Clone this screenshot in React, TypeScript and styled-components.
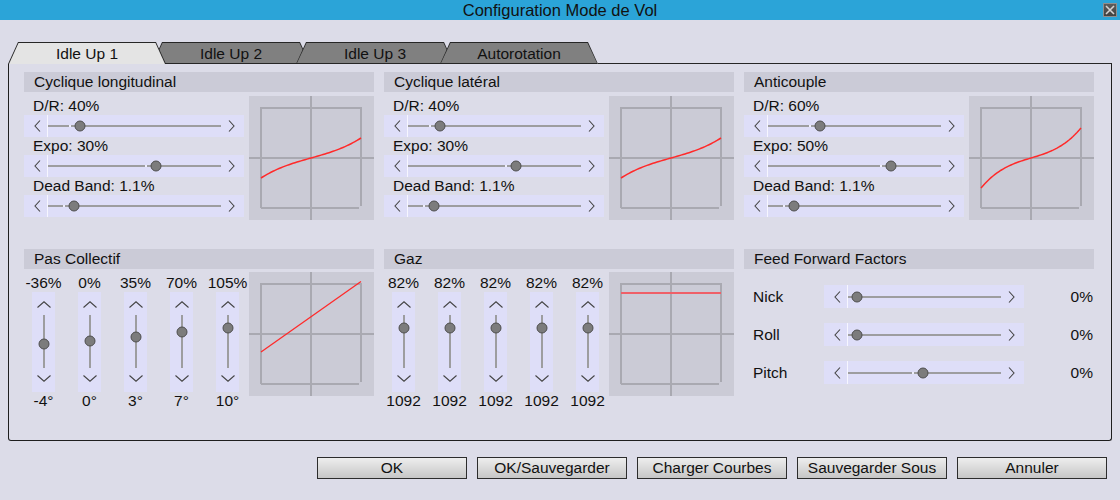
import React from "react";
import styled, { createGlobalStyle } from "styled-components";

const GlobalStyle = createGlobalStyle`
  html, body { margin: 0; padding: 0; background: #dcdce8; }
  body {
    font-family: "Liberation Sans", Arial, sans-serif;
    font-size: 15.5px;
    color: #111;
  }
  * { box-sizing: border-box; }
`;

const Window = styled.div`
  width: 1120px;
  height: 500px;
  background: #dcdce8;
  display: flex;
  flex-direction: column;
  overflow: hidden;
`;

const TitleBar = styled.div`
  height: 20px;
  background: #2ba4d8;
  display: grid;
  grid-template-columns: 1fr auto 1fr;
  align-items: center;
`;

const Title = styled.div`
  grid-column: 2;
  line-height: 20px;
  font-size: 16.5px;
`;

const CloseBtn = styled.div`
  grid-column: 3;
  justify-self: end;
  margin-right: 3px;
  width: 14px;
  height: 14px;
  background: linear-gradient(#5c5c5c, #424242);
  border: 1px solid #8e8e8e;
  display: flex;
  align-items: center;
  justify-content: center;
`;

const TabStrip = styled.div`
  display: flex;
  margin-top: 22px;
  padding-left: 8px;
  height: 22px;
`;

const TabShape = styled.div<{ $active?: boolean }>`
  width: 158px;
  height: 22px;
  margin-left: -14px;
  &:first-child { margin-left: 0; }
  background: #262626;
  padding: 1px 1px ${(p) => (p.$active ? 0 : 1)}px;
  clip-path: polygon(10px 0, 148px 0, 100% 100%, 0 100%);
  position: relative;
  z-index: ${(p) => (p.$active ? 2 : 1)};
`;

const TabFace = styled.div<{ $active?: boolean }>`
  height: 100%;
  background: ${(p) => (p.$active ? "#e4e4e4" : "#808080")};
  clip-path: polygon(9.5px 0, calc(100% - 9.5px) 0, 100% 100%, 0 100%);
  display: flex;
  align-items: center;
  justify-content: center;
  line-height: 1;
  padding-top: 1px;
`;

const TabFiller = styled.div`
  flex: 1;
  border-bottom: 1px solid #262626;
  margin-right: 8px;
`;

const Panel = styled.div`
  margin-left: 8px;
  width: 1104px;
  height: 377px;
  border: 1px solid #1e1e1e;
  border-top: none;
  border-radius: 0 0 3px 3px;
  padding: 8px 16px 0 15px;
  display: grid;
  grid-template-columns: repeat(3, 350px);
  grid-template-rows: 148px auto;
  column-gap: 10px;
  row-gap: 29px;
  align-content: start;
`;

const Section = styled.div`
  display: flex;
  flex-direction: column;
`;

const SectionHeader = styled.div`
  height: 20px;
  line-height: 20px;
  background: #cbcbd7;
  padding-left: 10px;
  white-space: nowrap;
`;

const CurveRow = styled.div`
  display: flex;
  gap: 5px;
  margin-top: 4px;
`;

const Controls = styled.div`
  width: 220px;
  margin-top: 1px;
  display: flex;
  flex-direction: column;
`;

const Label = styled.div`
  height: 18px;
  line-height: 18px;
  padding-left: 9px;
  white-space: nowrap;
`;

const CurveBox = styled.div`
  width: 125px;
  height: 124px;
  background: #cbcbd6;
  flex: none;
  svg { display: block; }
`;

/* Horizontal slider */
const HRow = styled.div<{ $w: number; $h: number }>`
  width: ${(p) => p.$w}px;
  height: ${(p) => p.$h}px;
  background: #dedef8;
  display: grid;
  grid-template-columns: 23px 1px 1fr 23px;
`;

const LeftCap = styled.div`
  display: flex;
  align-items: center;
  justify-content: flex-end;
  padding-right: 6px;
`;

const RightCap = styled.div`
  display: flex;
  align-items: center;
  padding-left: 7px;
`;

const Divider = styled.div`
  background: #f6f6ff;
`;

const HTrack = styled.div`
  position: relative;
  &::before {
    content: "";
    position: absolute;
    left: 0;
    right: 0;
    top: 50%;
    height: 2px;
    margin-top: -1px;
    background: #9d9d9f;
  }
`;

const Knob = styled.div`
  position: absolute;
  width: 11px;
  height: 11px;
  border-radius: 50%;
  background: #7c7c7c;
  border: 1px solid #4e4e4e;
  transform: translate(-50%, -50%);
`;

const Notch = styled.div`
  position: absolute;
  width: 2px;
  height: 2px;
  top: 50%;
  margin-top: -1px;
  background: #eeeefa;
`;

/* Vertical slider */
const VGroup = styled.div`
  display: flex;
  gap: 23px;
  padding-left: 8px;
  margin-top: 2px;
  width: 220px;
  flex: none;
`;

const VCol = styled.div`
  width: 23px;
  display: flex;
  flex-direction: column;
  align-items: center;
`;

const VLabel = styled.div`
  height: 18px;
  line-height: 18px;
  white-space: nowrap;
`;

const VBox = styled.div`
  width: 23px;
  height: 100px;
  background: #dedef8;
  display: grid;
  grid-template-rows: 23px 53px 24px;
`;

const UpCap = styled.div`
  display: flex;
  justify-content: center;
  align-items: flex-end;
  padding-bottom: 7px;
`;

const DownCap = styled.div`
  display: flex;
  justify-content: center;
  align-items: flex-start;
  padding-top: 7px;
`;

const VTrack = styled.div`
  position: relative;
  &::before {
    content: "";
    position: absolute;
    top: 0;
    bottom: 0;
    left: 50%;
    width: 2px;
    margin-left: -1px;
    background: #9d9d9f;
  }
`;

const Row2Body = styled.div`
  display: flex;
  gap: 5px;
  margin-top: 3px;
`;

const FFBody = styled.div`
  display: flex;
  flex-direction: column;
  gap: 15px;
  margin-top: 16px;
`;

const FFRow = styled.div`
  display: grid;
  grid-template-columns: 71px 200px 1fr;
  padding-left: 9px;
  height: 23px;
  line-height: 23px;
  align-items: center;
`;

const FFValue = styled.div`
  text-align: right;
  padding-right: 1px;
`;

const ButtonBar = styled.div`
  display: flex;
  justify-content: flex-end;
  gap: 10px;
  padding-right: 13px;
  margin-top: 16px;
`;

const Button = styled.button`
  width: 150px;
  height: 22px;
  padding: 0;
  font-family: inherit;
  font-size: 15.5px;
  color: #111;
  background: linear-gradient(#eeeeee, #c6c6c6);
  border: 1px solid #2c2c2c;
  border-radius: 0;
`;

const ChevL = () => (
  <svg width="7" height="12" viewBox="0 0 7 12">
    <polyline points="6,0.5 1,6 6,11.5" fill="none" stroke="#444" strokeWidth="1.1" />
  </svg>
);
const ChevR = () => (
  <svg width="7" height="12" viewBox="0 0 7 12">
    <polyline points="1,0.5 6,6 1,11.5" fill="none" stroke="#444" strokeWidth="1.1" />
  </svg>
);
const ChevU = () => (
  <svg width="14" height="7" viewBox="0 0 14 7">
    <polyline points="0.5,6.5 7,0.8 13.5,6.5" fill="none" stroke="#444" strokeWidth="1.1" />
  </svg>
);
const ChevD = () => (
  <svg width="14" height="7" viewBox="0 0 14 7">
    <polyline points="0.5,0.5 7,6.2 13.5,0.5" fill="none" stroke="#444" strokeWidth="1.1" />
  </svg>
);

function HSlider({ w, h, pos }: { w: number; h: number; pos: number }) {
  return (
    <HRow $w={w} $h={h}>
      <LeftCap><ChevL /></LeftCap>
      <Divider />
      <HTrack>
        {pos - 10 > 1 && <Notch style={{ left: pos - 11 }} />}
        <Knob style={{ left: pos, top: "50%" }} />
      </HTrack>
      <RightCap><ChevR /></RightCap>
    </HRow>
  );
}

function VSlider({ top, bottom, pos }: { top: string; bottom: string; pos: number }) {
  return (
    <VCol>
      <VLabel>{top}</VLabel>
      <VBox>
        <UpCap><ChevU /></UpCap>
        <VTrack>
          <Knob style={{ top: pos, left: "50%" }} />
        </VTrack>
        <DownCap><ChevD /></DownCap>
      </VBox>
      <VLabel>{bottom}</VLabel>
    </VCol>
  );
}

function Plot({ children }: { children?: React.ReactNode }) {
  return (
    <CurveBox>
      <svg width="125" height="124" viewBox="0 0 125 124">
        <g stroke="#a9a9b1" strokeWidth="2" fill="none">
          <line x1="62" y1="0" x2="62" y2="124" />
          <line x1="0" y1="62" x2="125" y2="62" />
          <polyline points="12,112 12,12 112,12 112,110" />
          <line x1="12" y1="112" x2="110" y2="112" />
        </g>
        {children}
      </svg>
    </CurveBox>
  );
}

function expoPath(dr: number, expo: number) {
  const pts: string[] = [];
  for (let i = 0; i <= 50; i++) {
    const x = -1 + (2 * i) / 50;
    const y = dr * (expo * x * x * x + (1 - expo) * x);
    pts.push(`${(62 + 50 * x).toFixed(2)},${(62 - 50 * y).toFixed(2)}`);
  }
  return pts.join(" ");
}

type Cyc = {
  title: string;
  dr: number;
  expo: number;
  pos: [number, number, number];
};

const cyclics: Cyc[] = [
  { title: "Cyclique longitudinal", dr: 40, expo: 30, pos: [32, 108, 26] },
  { title: "Cyclique latéral", dr: 40, expo: 30, pos: [32, 108, 26] },
  { title: "Anticouple", dr: 60, expo: 50, pos: [52, 123, 26] },
];

const pas = [
  { top: "-36%", bottom: "-4°", pos: 29 },
  { top: "0%", bottom: "0°", pos: 26 },
  { top: "35%", bottom: "3°", pos: 22 },
  { top: "70%", bottom: "7°", pos: 17 },
  { top: "105%", bottom: "10°", pos: 13 },
];

const ff = [
  { name: "Nick", pos: 9 },
  { name: "Roll", pos: 9 },
  { name: "Pitch", pos: 75 },
];

const tabs = ["Idle Up 1", "Idle Up 2", "Idle Up 3", "Autorotation"];
const buttons = ["OK", "OK/Sauvegarder", "Charger Courbes", "Sauvegarder Sous", "Annuler"];

export default function App() {
  return (
    <Window>
      <GlobalStyle />
      <TitleBar>
        <Title>Configuration Mode de Vol</Title>
        <CloseBtn>
          <svg width="10" height="10" viewBox="0 0 10 10">
            <path d="M1 1 L9 9 M9 1 L1 9" stroke="#d4d4d4" strokeWidth="1.6" />
          </svg>
        </CloseBtn>
      </TitleBar>

      <TabStrip>
        {tabs.map((t, i) => (
          <TabShape key={t} $active={i === 0}>
            <TabFace $active={i === 0}>{t}</TabFace>
          </TabShape>
        ))}
        <TabFiller />
      </TabStrip>

      <Panel>
        {cyclics.map((c) => (
          <Section key={c.title}>
            <SectionHeader>{c.title}</SectionHeader>
            <CurveRow>
              <Controls>
                <Label>D/R: {c.dr}%</Label>
                <HSlider w={220} h={22} pos={c.pos[0]} />
                <Label>Expo: {c.expo}%</Label>
                <HSlider w={220} h={22} pos={c.pos[1]} />
                <Label>Dead Band: 1.1%</Label>
                <HSlider w={220} h={22} pos={c.pos[2]} />
              </Controls>
              <Plot>
                <polyline
                  points={expoPath(c.dr / 100, c.expo / 100)}
                  fill="none"
                  stroke="#ff2a2a"
                  strokeWidth="1.5"
                />
              </Plot>
            </CurveRow>
          </Section>
        ))}

        <Section>
          <SectionHeader>Pas Collectif</SectionHeader>
          <Row2Body>
            <VGroup>
              {pas.map((p) => (
                <VSlider key={p.top} top={p.top} bottom={p.bottom} pos={p.pos} />
              ))}
            </VGroup>
            <Plot>
              <line x1="12" y1="80" x2="112" y2="9.5" stroke="#ff2a2a" strokeWidth="1.3" />
            </Plot>
          </Row2Body>
        </Section>

        <Section>
          <SectionHeader>Gaz</SectionHeader>
          <Row2Body>
            <VGroup>
              {[0, 1, 2, 3, 4].map((i) => (
                <VSlider key={i} top="82%" bottom="1092" pos={13} />
              ))}
            </VGroup>
            <Plot>
              <line x1="12" y1="21" x2="112" y2="21" stroke="#ef6068" strokeWidth="2" />
            </Plot>
          </Row2Body>
        </Section>

        <Section>
          <SectionHeader>Feed Forward Factors</SectionHeader>
          <FFBody>
            {ff.map((f) => (
              <FFRow key={f.name}>
                <span>{f.name}</span>
                <HSlider w={200} h={23} pos={f.pos} />
                <FFValue>0%</FFValue>
              </FFRow>
            ))}
          </FFBody>
        </Section>
      </Panel>

      <ButtonBar>
        {buttons.map((b) => (
          <Button key={b}>{b}</Button>
        ))}
      </ButtonBar>
    </Window>
  );
}
